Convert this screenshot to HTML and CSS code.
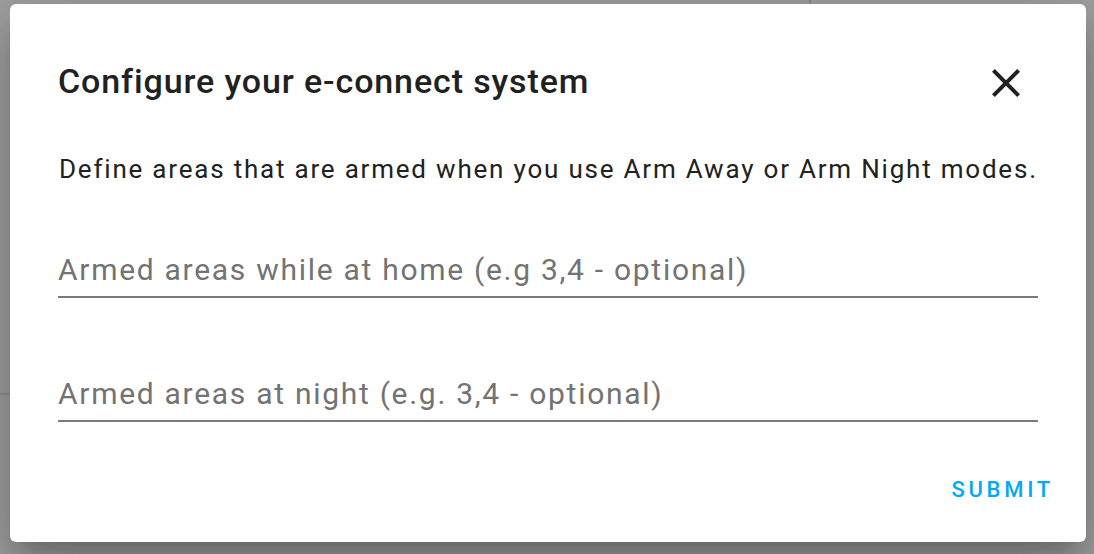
FILE: index.html
```html
<!DOCTYPE html>
<html>
    <head>
        <meta http-equiv='Content-Type' content='text/html; charset=UTF-8'>
        <title>e-connect</title>
        <link rel="stylesheet" href="styles.css">
    </head>
    <body>
        <div class='dialog'>
            <div class='header'>
                <h2 class='title'>Configure your e-connect system</h2>
                <button class='close' aria-label='Close'>
                    <svg viewBox='0 0 24 24' width='48' height='48'>
                        <path d='M19,6.41L17.59,5L12,10.59L6.41,5L5,6.41L10.59,12L5,17.59L6.41,19L12,13.41L17.59,19L19,17.59L13.41,12L19,6.41Z'/>
                    </svg>
                </button>
            </div>
            <p class='desc'>Define areas that are armed when you use Arm Away or Arm Night modes.</p>
            <div class='field first'>
                <input type='text' placeholder='Armed areas while at home (e.g 3,4 - optional)'>
            </div>
            <div class='field second'>
                <input type='text' placeholder='Armed areas at night (e.g. 3,4 - optional)'>
            </div>
            <div class='actions'>
                <button class='btn'>Submit</button>
            </div>
        </div>
    </body>
</html>
```

FILE: styles.css
```css
html, body {
    margin: 0;
    height: 100%;
}
body {
    background-color: #a0a0a0;
    background-image:
        linear-gradient(#8a8a8a, #8a8a8a),
        linear-gradient(#8f8f8f, #8f8f8f);
    background-size: 2px 4px, 10px 2px;
    background-position: 809px 0, 0 393px;
    background-repeat: no-repeat;
    font-family: Roboto, "Liberation Sans", sans-serif;
    overflow: hidden;
}
.dialog {
    box-sizing: border-box;
    width: 1076px;
    height: 538px;
    margin: 4px 0 0 10px;
    padding: 55px 48px 0 48px;
    background: #fff;
    border-radius: 6px;
    box-shadow: 0 16px 22px -10px rgba(0,0,0,.2), 0 34px 56px 4px rgba(0,0,0,.14), 0 12px 66px 12px rgba(0,0,0,.12);
}
.header {
    display: flex;
    align-items: center;
    justify-content: space-between;
    height: 44px;
}
.title {
    margin: 0;
    font-size: 34px;
    line-height: 44px;
    font-weight: 500;
    letter-spacing: 0.026em;
    color: #212121;
}
.close {
    border: 0;
    padding: 0;
    background: none;
    width: 48px;
    height: 48px;
    margin: 4px 8px 0 0;
}
.close svg {
    display: block;
    fill: #212121;
}
.desc {
    margin: 50px 0 0 1px;
    font-size: 26px;
    line-height: 32px;
    letter-spacing: 0.069em;
    color: #212121;
}
.field input {
    display: block;
    box-sizing: content-box;
    width: 100%;
    height: 36px;
    margin: 0;
    padding: 0 0 9px;
    border: 0;
    border-bottom: 2px solid #7b7b7b;
    outline: none;
    background: none;
    font-family: inherit;
    font-size: 30px;
    letter-spacing: 0.057em;
    color: #212121;
}
.field input::placeholder {
    color: #737373;
}
.first {
    margin-top: 66px;
}
.second {
    margin-top: 77px;
}
.actions {
    display: flex;
    justify-content: flex-end;
    margin: 56px -16px 0 0;
}
.btn {
    border: 0;
    padding: 0;
    background: none;
    font-family: inherit;
    font-size: 22px;
    line-height: 24px;
    font-weight: 500;
    letter-spacing: 0.17em;
    text-transform: uppercase;
    color: #03a9f4;
}
```
